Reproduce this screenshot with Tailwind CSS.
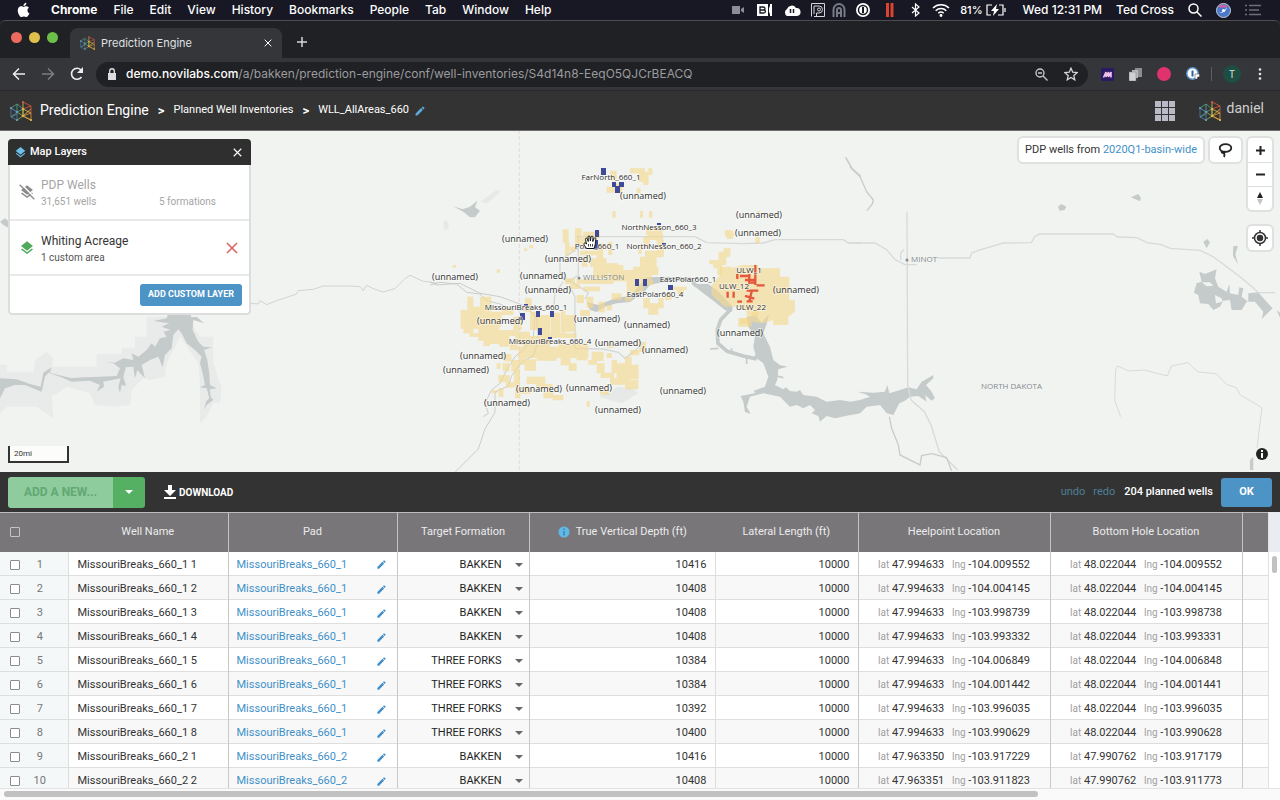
<!DOCTYPE html>
<html lang="en">
<head>
  <meta charset="UTF-8">
  <meta name="viewport" content="width=device-width, initial-scale=1.0">
  <title>Prediction Engine</title>
  <script src="https://cdn.jsdelivr.net/npm/@tailwindcss/browser@4"></script>
</head>
<body class="flex flex-col h-screen overflow-hidden bg-[#202124] font-['Roboto',sans-serif]">

  <!-- Shared icons -->
  <svg class="hidden">
    <symbol id="logo" viewBox="0 0 22 20">
      <g fill="none" stroke-width=".8">
        <path stroke="#4f7fb5" d="M1 7v9l6 3V11zM1 7l6 4M1 16l6-5"/>
        <path stroke="#58a88f" d="M1 7l6-4 6 5-6 3M7 3v8M1 16l6-3"/>
        <path stroke="#8bb85c" d="M7 19l6-4V8M7 11l6 4"/>
        <path stroke="#e8c547" d="M13 1v14l8-7M13 8l8 4M13 15l8 4"/>
        <path stroke="#e2593f" d="M13 1l8 4v7M13 8l8-3"/>
        <path stroke="#e69a3c" d="M21 12v7l-8-4 8-3"/>
      </g>
      <g fill="#d9b64a"><circle cx="13" cy="8" r="1.2"/><circle cx="13" cy="15" r="1.2"/><circle cx="21" cy="19" r="1.1"/></g>
      <g fill="#5fa3a8"><circle cx="1" cy="7" r="1.1"/><circle cx="7" cy="11" r="1.2"/><circle cx="7" cy="19" r="1.1"/></g>
      <circle cx="13" cy="1" r="1" fill="#e2593f"/>
    </symbol>
    <symbol id="pencil" viewBox="0 0 24 24"><path fill="currentColor" d="M3 17.25V21h3.75L17.8 9.94l-3.75-3.75L3 17.25zM20.7 7.04a1 1 0 0 0 0-1.41l-2.34-2.34a1 1 0 0 0-1.41 0l-1.83 1.83 3.75 3.75 1.83-1.83z"/></symbol>
    <symbol id="layers" viewBox="0 0 24 24"><path fill="currentColor" d="M12 18.54l-7.37-5.73L3 14.07l9 7 9-7-1.63-1.27L12 18.54zM12 16l7.36-5.73L21 9l-9-7-9 7 1.63 1.27L12 16z"/></symbol>
    <symbol id="caret" viewBox="0 0 10 5"><path fill="currentColor" d="M0 0h10L5 5z"/></symbol>
    <symbol id="cross" viewBox="0 0 12 12"><path fill="none" stroke="currentColor" stroke-width="1.5" d="M1 1l10 10M11 1L1 11"/></symbol>
  </svg>

  <!-- System menu bar -->
  <div class="flex items-center shrink-0 h-5 pl-4 pr-[19px] bg-[#171824] text-white text-[12px] font-medium font-['Inter',sans-serif]">
    <nav class="flex items-center gap-4 mr-auto">
      <svg class="w-4 h-4 mr-[3px]" viewBox="0 0 24 24" fill="#fff"><path d="M17.1 12.6c0-2.7 2.2-4 2.3-4.1-1.3-1.8-3.2-2.1-3.9-2.1-1.7-.2-3.2 1-4.1 1-.8 0-2.1-1-3.5-.9C6.1 6.5 4.4 7.5 3.5 9.1c-1.9 3.300-.5 8.200 1.400 10.800.9 1.300 2 2.800 3.400 2.700 1.400-.1 1.900-.9 3.500-.9s2.100.9 3.500.8c1.500 0 2.400-1.300 3.300-2.600 1-1.500 1.500-3 1.500-3-.1-.1-3-1.200-3-4.300zM14.400 4.600c.8-.9 1.300-2.200 1.100-3.400-1.100 0-2.400.7-3.200 1.600-.7.8-1.300 2.100-1.200 3.300 1.300.1 2.500-.6 3.300-1.500z"/></svg>
      <a href="#" class="font-bold">Chrome</a>
      <a href="#">File</a>
      <a href="#">Edit</a>
      <a href="#">View</a>
      <a href="#">History</a>
      <a href="#">Bookmarks</a>
      <a href="#">People</a>
      <a href="#">Tab</a>
      <a href="#">Window</a>
      <a href="#">Help</a>
    </nav>
    <div class="flex items-center gap-[10px]">
      <svg class="w-3 h-3 mr-[3px]" viewBox="0 0 12 12" fill="#8b8d97"><path d="M0 2h8v8H0zM9 5l3-2v6L9 7z"/></svg>
      <svg class="w-4 h-3" viewBox="0 0 16 12"><path fill="#fff" d="M0 0h11v12H0zM12 4l1-2V0h2v12h-2v-2l-1-2z"/><path fill="none" stroke="#171824" stroke-width="1.3" d="M3 3h3q2 0 2 1.5T6 6H3V3zM3 6h3.500q2 0 2 1.500T6.500 9H3V6z"/></svg>
      <svg class="w-[18px] h-3" viewBox="0 0 18 12"><path fill="#fff" d="M4 12a4 4 0 0 1 0-7 5 5 0 0 1 9-1 4 4 0 0 1 1 8z"/><path stroke="#171824" stroke-width="1.5" d="M7.500 5v4M10.500 5v4"/></svg>
      <svg class="w-[14px] h-[14px] -mr-[3px]" viewBox="0 0 14 14" fill="none" stroke="#d5d5da"><path d="M.5.5h13v13H3M.5.5v13M3 11V3h5a3.500 3.500 0 0 1 0 7H5.500v3"/><circle cx="8" cy="6.500" r="1.500"/></svg>
      <svg class="w-[14px] h-[14px]" viewBox="0 0 14 14" fill="none" stroke="#777985" stroke-width="2"><path d="M1.500 14V6.500a5.500 5.500 0 0 1 11 0V14M5 14V7a2 2 0 0 1 4 0v7M5 10h4"/></svg>
      <svg class="w-[14px] h-[14px]" viewBox="0 0 14 14"><circle cx="7" cy="7" r="7" fill="#fff"/><circle cx="7" cy="7" r="4.500" fill="none" stroke="#171824" stroke-width="1.500"/><path d="M7 4v6" stroke="#171824" stroke-width="2"/></svg>
      <svg class="w-2 h-[14px] mx-[6px]" viewBox="0 0 8 14" fill="#d9432f"><path d="M0 0h3v14H0zM4.500 0h3v14h-3z"/></svg>
      <svg class="w-3 h-[14px]" viewBox="0 0 12 14" fill="none" stroke="#fff" stroke-width="1.200"><path d="M2 4l7 6-3.500 3V1L9 4l-7 6"/></svg>
      <svg class="w-[18px] h-[14px]" viewBox="0 0 18 14" fill="none" stroke="#fff" stroke-width="1.500"><path d="M1 5a11.500 11.500 0 0 1 16 0M3.700 7.700a7.500 7.500 0 0 1 10.600 0M6.300 10.200a4 4 0 0 1 5.400 0"/><circle cx="9" cy="12.500" r=".7"/></svg>
      <span class="-mr-[7px] text-[11px]">81%</span>
      <svg class="w-5 h-3" viewBox="0 0 20 12" fill="none" stroke="#fff" stroke-width="1.200"><path d="M6 1H1v10h4M13 1h4v10h-5M19 4v4"/><path fill="#fff" d="M11 0L5 7h3l-1 5 6-7h-3z" stroke="none"/></svg>
    </div>
    <div class="flex items-center gap-[14px] ml-[17px]">
      <span>Wed 12:31 PM</span>
      <span>Ted Cross</span>
      <svg class="w-[14px] h-[14px]" viewBox="0 0 14 14" fill="none" stroke="#fff" stroke-width="1.500"><circle cx="5.500" cy="5.500" r="4.500"/><path d="M9 9l4.500 4.500"/></svg>
      <svg class="w-[15px] h-[15px]" viewBox="0 0 15 15"><circle cx="7.500" cy="7.500" r="7" fill="#4a79c9" stroke="#c9c9d6"/><path fill="#d35fa0" d="M2 4q5-5 10 0-5 1-10 0z"/><path fill="#e9f2ff" d="M3 10q5-1 8-6-1 6-8 6z"/><circle cx="7.500" cy="7.500" r="1.500" fill="#fff"/></svg>
      <svg class="w-4 h-3" viewBox="0 0 16 12" stroke="#6c6e7a" stroke-width="1.300"><path d="M0 1.500h2M4 1.500h12M0 6h2M4 6h10M0 10.500h2M4 10.500h12"/></svg>
    </div>
  </div>

  <!-- Browser tabs -->
  <div class="flex items-end shrink-0 h-[38px] border-t border-[#4c4d50] rounded-t-md">
    <div class="flex items-center gap-[7px] w-[70px] h-full pl-[11px] pb-1">
      <span class="w-[11px] h-[11px] rounded-full bg-[#ed6a5e]"></span>
      <span class="w-[11px] h-[11px] rounded-full bg-[#e0c04c]"></span>
      <span class="w-[11px] h-[11px] rounded-full bg-[#6cc04a]"></span>
    </div>
    <div class="flex items-center w-[212px] h-[30px] pl-[10px] pr-[10px] rounded-t-lg bg-[#35363a] text-[11px] text-[#dfe0e2] font-['Inter',sans-serif]">
      <svg class="w-[15px] h-[14px] mr-[6px]"><use href="#logo"/></svg>
      <span class="grow">Prediction Engine</span>
      <button aria-label="Close tab"><svg class="w-2 h-2 text-white"><use href="#cross"/></svg></button>
    </div>
    <button aria-label="New tab" class="ml-[14px] mb-[10px]"><svg class="w-3 h-3" viewBox="0 0 12 12" stroke="#d6d7d9" stroke-width="1.500"><path d="M6 1v10M1 6h10"/></svg></button>
  </div>

  <!-- Browser toolbar -->
  <div class="flex items-center shrink-0 h-8 pl-3 pr-[18px] bg-[#35363a] font-['Inter',sans-serif]">
    <button aria-label="Back"><svg class="w-[14px] h-[14px]" viewBox="0 0 14 14" fill="none" stroke="#eee" stroke-width="1.500"><path d="M13 7H2M7 1.500L1.500 7 7 12.500"/></svg></button>
    <button aria-label="Forward" class="ml-[15px]"><svg class="w-[14px] h-[14px]" viewBox="0 0 14 14" fill="none" stroke="#7b7c80" stroke-width="1.500"><path d="M1 7h11M7 1.500L12.500 7 7 12.500"/></svg></button>
    <button aria-label="Reload" class="ml-[15px]"><svg class="w-[14px] h-[14px]" viewBox="0 0 14 14" fill="none" stroke="#eee" stroke-width="1.600"><path d="M11.500 10A5.500 5.500 0 1 1 11 3"/><path fill="#eee" stroke="none" d="M13 0v6H7z"/></svg></button>
    <div class="flex items-center grow h-[25px] ml-3 px-[10px] rounded-full bg-[#202124]">
      <svg class="w-3 h-3 mr-2" viewBox="0 0 12 12"><path fill="#dcdde0" d="M2 5h8v7H2z"/><path fill="none" stroke="#dcdde0" stroke-width="1.400" d="M3.700 5V3a2.300 2.300 0 0 1 4.600 0v2"/></svg>
      <span class="grow text-[12px] text-[#9a9b9f]"><span class="font-medium text-white">demo.novilabs.com</span>/a/bakken/prediction-engine/conf/well-inventories/S4d14n8-EeqO5QJCrBEACQ</span>
      <svg class="w-[13px] h-[13px]" viewBox="0 0 13 13" fill="none" stroke="#c6c7ca" stroke-width="1.400"><circle cx="5" cy="5" r="4"/><path d="M8 8l4.500 4.500M3 5h4"/></svg>
      <svg class="w-[14px] h-[14px] ml-4" viewBox="0 0 24 24" fill="none" stroke="#d6d7d9" stroke-width="2.200"><path d="M12 2l3 7 7.500.7-5.700 5 1.700 7.300L12 18l-6.500 4 1.700-7.300-5.700-5L9 9z"/></svg>
    </div>
    <div class="flex items-center gap-[15px] ml-[13px]">
      <svg class="w-[13px] h-[13px]" viewBox="0 0 13 13"><rect width="13" height="13" rx="1" fill="#2b1a63"/><path fill="none" stroke="#f0c3ef" stroke-width="1.600" d="M2.500 9.500L5 4v5l2.500-5v5L10 4v5.500"/></svg>
      <svg class="w-[13px] h-[13px]" viewBox="0 0 13 13"><path fill="#8d8e91" d="M6 0h7v9H6z"/><path fill="#b9babc" d="M3 2h6v8H3z"/><path fill="#d0d0d2" stroke="#77787b" stroke-width=".5" d="M0 4h7v9H0z"/></svg>
      <span class="w-[14px] h-[14px] rounded-full bg-[#e0326c]"></span>
      <svg class="w-[14px] h-[14px]" viewBox="0 0 14 14"><circle cx="6.500" cy="6.500" r="5.700" fill="#fff" stroke="#5b95d0" stroke-width="1.500"/><path stroke="#2d5f9e" stroke-width="2" d="M6.500 3.500v6"/><path fill="#fff" stroke="#35363a" stroke-width=".5" d="M9 7h4.500v3h-2v2H9z"/></svg>
      <span class="w-px h-[14px] -ml-1 bg-[#5d5e62]"></span>
      <span class="flex items-center justify-center w-[18px] h-[18px] -ml-1 rounded-full bg-[#1f4d42] text-[10px] text-[#cfe0da]">T</span>
      <button aria-label="Browser menu" class="ml-[2px]"><svg class="w-1 h-3" viewBox="0 0 4 12" fill="#e6e6e6"><circle cx="2" cy="1.500" r="1.300"/><circle cx="2" cy="6" r="1.300"/><circle cx="2" cy="10.500" r="1.300"/></svg></button>
    </div>
  </div>

  <!-- App header -->
  <header class="flex items-center justify-between shrink-0 h-[41px] px-[10px] border-t border-b border-t-[#29292b] border-b-[#6d6b6d] bg-[#333333] text-white">
    <nav class="flex items-center">
      <svg class="w-[22px] h-5 mr-2"><use href="#logo"/></svg>
      <a href="#" class="text-[14px]">Prediction Engine</a>
      <span class="mx-[9px] text-[13px] font-bold">&gt;</span>
      <a href="#" class="text-[11px]">Planned Well Inventories</a>
      <span class="mx-[9px] text-[13px] font-bold">&gt;</span>
      <span class="text-[11px]">WLL_AllAreas_660</span>
      <button aria-label="Rename inventory" class="ml-[5px]"><svg class="block w-3 h-3 text-[#5fa9dc]"><use href="#pencil"/></svg></button>
    </nav>
    <div class="flex items-center mr-[6px]">
      <button aria-label="Apps"><svg class="block w-5 h-5" viewBox="0 0 20 20" fill="#b9bac6"><path d="M0 0h6v6H0zM7 0h6v6H7zM14 0h6v6h-6zM0 7h6v6H0zM7 7h6v6H7zM14 7h6v6h-6zM0 14h6v6H0zM7 14h6v6H7zM14 14h6v6h-6z"/></svg></button>
      <svg class="w-[22px] h-5 ml-6 mr-[6px]"><use href="#logo"/></svg>
      <span class="pb-1 text-[14px] text-[#cfcfcf]">daniel</span>
    </div>
  </header>

  <!-- Map -->
  <main class="relative grow min-h-0 overflow-hidden bg-[#f1f3f0]">
    <svg class="absolute inset-0 w-full h-full" viewBox="0 131 1280 341" preserveAspectRatio="xMidYMid slice">
      <!-- West: reservoir -->
      <g transform="translate(0 130) scale(.3333)">
        <path fill="#e8ebe9" d="M0 705H20V725H100L105 690 140 665 160 685 155 710H290V672H365V655H405V620H440V560H560L600 620H640V700L665 770 660 820H640L620 860 600 880V760L595 700 540 620 500 700 495 740 450 750 430 745 395 780 390 825 340 830 285 825 270 790 200 770 180 785 155 800 160 865 110 830H60L20 830 0 850z"/>
        <path fill="#c5cbca" d="M0 745L50 748 90 762 122 770 130 728 155 712 150 728 175 735 215 745 250 742 300 740 350 738 360 715 340 700 315 695 345 698 370 685 400 690 395 670 415 680 440 660 455 640 465 650 480 625 500 620 490 605 512 600 485 590 508 580 460 573 500 565 505 550 568 550 575 562 590 560 612 580 580 570 578 600 595 635 610 650 635 652 612 660 622 690 628 730 630 765 650 775 630 778 632 800 640 810 620 825 612 840 618 815 628 805 620 775 600 772 615 765 608 730 600 700 605 680 585 660 560 640 545 610 535 598 520 615 515 655 495 675 488 712 475 680 450 690 425 705 435 745 412 720 405 745 400 710 378 712 370 740 378 768 365 765 360 790 355 770 362 745 310 755 312 770 290 785 300 765 270 752 215 755 185 742 145 728 135 740 125 785 75 765 45 765 15 775 0 805zM0 275L15 265 25 273V293L10 285z"/>
        <path fill="none" stroke="#cfd3d1" stroke-width="3" d="M750 520l25 2 5-10 20 12 30-12 25-8 35-12 5-10 45-4 30-10h80l30 2 10 12 10-16 20 10 30 10 35-10 30-30 15-10 40 18 40 5"/>
      </g>

      <!-- Centre: roads, rivers and lake -->
      <g transform="translate(430 130) scale(.3333)">
        <path fill="#e6e9e7" d="M505 800l60-30 40 5 20 15-50 30zM40 275l12-5 5 25-15 5zM150 215l50-35 12 5-40 35z"/>
        <path fill="#c5cbca" d="M68 228L98 238 120 230 142 212 135 232 150 242 135 262H120L100 245zM470 516L505 525 560 503 600 498 625 470 650 442 720 440 730 452 690 458 660 464 645 484 600 516 560 520 525 530 500 546 480 540zM785 462L835 462 860 480 890 510 908 530 905 546 885 540 850 512 820 490z"/>
        <path fill="#c5cbca" d="M950 562L975 555 995 578 1017 553 1010 582 1000 610 1020 650 1030 690 1050 705 1073 710 1045 718 1042 750 1035 765 1060 778 1068 772 1080 783 1100 785 1110 780 1120 795 1160 800 1190 815 1230 810 1262 815V855L1215 865 1190 858 1170 875 1165 858 1145 850 1155 840 1140 825 1120 835 1100 825 1080 830 1050 800 1000 790 960 800 950 830 962 852 945 846 940 815 932 798 975 790 972 782 1005 770 1015 740 1000 700 980 685 970 650 975 620 955 590z"/>
        <path fill="none" stroke="#c5cbca" stroke-width="11" d="M720 447h60l20 22M905 535l-33 35-10 30 2 40 28 24 48 14 35 8 12-18"/>
        <path fill="none" stroke="#c5cbca" stroke-width="5" d="M865 655l-25 2M905 670v-15M950 682v20M1030 735l30 8"/>
        <g fill="none" stroke="#d5d9d7" stroke-width="4">
          <path d="M440 320h355l35 18 110 3 60-2 35-10h205l15 10h40"/>
          <path d="M445 320v35l-55 35v40l15 20h20l20-15v-80M400 450l30 8 45 30-10 20M400 455l-25 35-3 35M425 480l10 20v155l85 2 45 10 20 18 20-15 25-20"/>
        </g>
        <g fill="none" stroke="#c8cdcc" stroke-width="3">
          <path d="M0 465l30-8 50 5 30 25 40 5 20 20 40 10 30 15 60 5 20 20 5 70-15 45-35 20-30 40-10 30-40 20v60l-30 50-20 60-70 70-40 20-10 15"/>
          <path d="M0 455l20 10 70-5 60 30 60 10 40 15 40 15 25 30-5 60-30 40-25 20-25 40-20 40-25 20-20 40 10 30-15 10"/>
          <path stroke-width="5" d="M1247 82l20 35 25 22"/>
        </g>
        <path stroke="#ddd0d0" stroke-width="2" stroke-dasharray="12 6" d="M268 0v1030"/>
      </g>

      <!-- East: roads and lakes -->
      <g transform="translate(850 130) scale(.3333)">
        <path fill="#c5cbca" d="M0 815L30 810 60 800 45 792 22 785 70 788 105 785 112 765 118 790 150 780 175 772 200 778 215 755 250 735 250 745 228 765 245 785 255 805 245 812 225 795 230 815 205 798 180 800 165 812 148 820 130 855 110 850 90 825 50 830 30 850 0 856z"/>
        <path fill="#c5cbca" d="M1048 425L1065 432 1100 418 1095 445 1105 470 1130 485 1138 462 1140 490 1165 495 1168 472 1180 475 1175 500 1195 515V490L1225 487 1245 510 1268 535 1235 567 1240 545 1215 515 1190 515 1175 540 1145 540 1140 510 1120 512 1110 530 1090 540 1075 522 1050 520 1045 495 1032 488 1040 460 1055 455z"/>
        <path fill="#f1f3f0" d="M1055 457h25l10 10-20 2zM1095 495l20 10 3 10-20 5z"/>
        <path fill="#c5cbca" d="M624 230l10-8 15 8-5 10-15 2zM843 202l22-10 8 12-3 10zM1060 335l12-8 8 10-10 18zM1150 348h14l-8 25 8 30-15-25zM1280 540l10 8v15zM1200 1020v-30l10-10v40z"/>
        <g fill="none" stroke="#d7dad8" stroke-width="4">
          <path d="M0 339h75l35 20 25 30 30 15h35M152 390v-20l10-12M262 384h98l5-15 20-8 75-22 84-1 10-18 15-8h220l14 9 58 2 30 15 40 5 30 12 90 6 40 20 80 60 30 25 25 22h50"/>
          <path d="M171 245l2 520 10 45 40 35 20 40 25 80 55 55"/>
          <path stroke-width="3" d="M812 860l-18-50 3-90 5-12 35 15 45-3 70 18 12-30 50-10 30 28 55 5 30 32 30 10 12 22 65 38-15 120"/>
          <path stroke="#c8cdcc" stroke-width="4" d="M118 860l7 35 20 50 5 30 60 30 5-28 30-6 45 12 15 40M0 110l30 30 20 45 20 25-3 12-16 20"/>
        </g>
      </g>

      <!-- Acreage blocks -->
      <g id="acreage" transform="translate(430 130) scale(.3333)" fill="#f5d990" fill-opacity=".65">
        <path d="M905 415l30-10h50v10h65v25h28v70h17v35l-20 15v25h-45v-15l-30 10-35-5v15h-40v-25h25v-20l-25-15h-40l-40-35v-30l25-30v-25h35z"/>
        <path d="M838 390h28v-25h15v-10h20v25h-12v25h-12v30h-15v-20h-12v-12h-12z"/>
        <path d="M885 300h20l8 12-6 15h-15l-8-15zM976 322h14v18h-14zM980 243h10v8h-10z"/>
      </g>

      <!-- Planned wells -->
      <g id="wells" fill="#3f4a9b"></g>
      <g transform="translate(430 130) scale(.3333)" fill="none" stroke="#e4573d" stroke-width="7">
        <path d="M893 485v18M911 485v18M922 432v15M922 515h14M930 438h30M945 450h30M958 432v30M976 405v60M962 458h15M980 466h24M950 482h35M966 480l-8 35M945 498l28 8M950 514h18"/>
      </g>

      <!-- Place names -->
      <g class="font-['Open_Sans',sans-serif] text-[8px]" fill="#868b90">
        <circle cx="579" cy="278" r="1.500"/><text x="583" y="280">WILLISTON</text>
        <circle cx="907" cy="260" r="1.500"/><text x="911" y="262">MINOT</text>
        <text x="981" y="389">NORTH DAKOTA</text>
      </g>
      <g id="labels" class="font-['Open_Sans',sans-serif]" fill="#2d2d2d" stroke="#fff" stroke-opacity=".6" stroke-width="1.500" paint-order="stroke" text-anchor="middle"></g>

      <!-- Grab cursor -->
      <g transform="translate(583 235)">
        <path fill="#fff" stroke="#111" d="M3.500 13.500C2 11 .5 9.500 1 8.500c.6-1 1.800-.3 2.500.5L2.500 4.500c-.3-1.500 1.500-1.800 2-.5l.8 2.500L5 2c0-1.500 2-1.500 2 0l.4 4L8 2c.2-1.400 2-1.200 2 .2L9.800 6.500 11 3.500c.5-1.200 2.200-.7 1.900.6C12.400 7 12.500 10 11 13.500z"/>
        <path stroke="#111" stroke-width=".8" d="M5.500 9v2.500M7.500 9v2.500M9.500 9v2.500"/>
      </g>
    </svg>

    <!-- Layers panel -->
    <section class="absolute top-2 left-2 w-[243px] rounded overflow-hidden">
      <div class="flex items-center h-[26px] pl-[6px] pr-[9px] bg-[#2f2f2f] text-white">
        <svg class="w-[13px] h-[13px] mr-[3px] text-[#6cc0ea]"><use href="#layers"/></svg>
        <h2 class="grow text-[11px] font-medium">Map Layers</h2>
        <button aria-label="Close panel"><svg class="block w-[9px] h-[9px]"><use href="#cross"/></svg></button>
      </div>
      <div class="rounded-b border-2 border-t-0 border-[#dcdedd] bg-white">
        <div class="flex items-center h-14 pl-[9px] border-b-2 border-[#e9e9e9] text-[#a5a5a5]">
          <svg class="w-4 h-4 mr-[6px] text-[#8a8a8a]" viewBox="0 0 24 24"><use href="#layers"/><path stroke="#fff" stroke-width="2.500" d="M3 0l21 21"/><path stroke="currentColor" stroke-width="2" d="M1 1l22 22"/></svg>
          <div class="w-[118px] pt-[2px]">
            <p class="text-[12px] leading-[17px]">PDP Wells</p>
            <p class="text-[10px] leading-4">31,651 wells</p>
          </div>
          <p class="pt-[19px] text-[10px] leading-4">5 formations</p>
        </div>
        <div class="flex items-center h-[55px] pl-[9px] pr-[11px] border-b-2 border-[#e9e9e9]">
          <svg class="w-4 h-4 mr-[6px] text-[#4fa95a]"><use href="#layers"/></svg>
          <div class="grow pt-[2px]">
            <p class="text-[12px] leading-[18px] text-[#333]">Whiting Acreage</p>
            <p class="text-[10px] leading-4 text-[#555]">1 custom area</p>
          </div>
          <button aria-label="Remove layer"><svg class="block w-3 h-3 text-[#dc5f5f]"><use href="#cross"/></svg></button>
        </div>
        <div class="flex justify-end pt-2 pb-[7px] pr-[7px]">
          <button class="h-[22px] px-2 rounded-[3px] bg-[#4c93c6] text-white text-[9px] font-bold">ADD CUSTOM LAYER</button>
        </div>
      </div>
    </section>

    <!-- Map controls -->
    <div class="absolute top-[7px] right-2 flex items-start gap-[7px]">
      <p class="h-6 px-[6px] rounded outline-2 outline-[#dfe1e0] bg-white text-[11px] leading-6 text-[#333]">PDP wells from <a href="#" class="text-[#3f90c8]">2020Q1-basin-wide</a></p>
      <button aria-label="Lasso select" class="flex items-center justify-center w-[31px] h-6 rounded outline-2 outline-[#dfe1e0] bg-white">
        <svg class="w-[15px] h-[15px]" viewBox="0 0 15 15" fill="none" stroke="#222" stroke-width="1.800"><ellipse cx="7.500" cy="5" rx="5.800" ry="3.800"/><path d="M3.500 8q0 2 2 2 2-.5 1-2M6 10q1 2 0 4"/></svg>
      </button>
      <div class="flex flex-col gap-4">
        <div class="flex flex-col w-6 rounded outline-2 outline-[#dfe1e0] bg-white divide-y divide-[#ddd]">
          <button aria-label="Zoom in" class="flex items-center justify-center h-[25px]"><svg class="w-[9px] h-[9px]" viewBox="0 0 9 9" stroke="#222" stroke-width="2"><path d="M4.500 0v9M0 4.500h9"/></svg></button>
          <button aria-label="Zoom out" class="flex items-center justify-center h-6"><svg class="w-[9px] h-[9px]" viewBox="0 0 9 9" stroke="#222" stroke-width="2"><path d="M0 4.500h9"/></svg></button>
          <button aria-label="Reset north" class="flex items-center justify-center h-[23px]"><svg class="w-[6px] h-[13px]" viewBox="0 0 6 13"><path fill="#222" d="M3 0l3 6H0z"/><path fill="#c4c4c4" d="M0 7h6l-3 6z"/></svg></button>
        </div>
        <button aria-label="Find my location" class="flex items-center justify-center w-6 h-6 rounded outline-2 outline-[#dfe1e0] bg-white">
          <svg class="w-4 h-4" viewBox="0 0 16 16" fill="none" stroke="#333" stroke-width="1.500"><circle cx="8" cy="8" r="5.500"/><path d="M8 0v3M8 13v3M0 8h3M13 8h3"/><circle cx="8" cy="8" r="2.500" fill="#333"/></svg>
        </button>
      </div>
    </div>
    <div class="absolute left-2 bottom-[9px] w-[61px] h-[17px] pl-1 border-2 border-t-0 border-[#333] bg-white/75 text-[8px] leading-4 text-[#333]">20mi</div>
    <button aria-label="Attribution" class="absolute right-3 bottom-3"><svg class="block w-3 h-3" viewBox="0 0 12 12"><circle cx="6" cy="6" r="6" fill="#222"/><path stroke="#fff" stroke-width="2" d="M6 2v2M6 5v5"/></svg></button>
  </main>

  <!-- Wells table -->
  <section class="flex flex-col shrink-0 h-[41%] bg-white">
    <div class="flex items-center shrink-0 h-10 pl-2 pr-2 bg-[#333333] text-white">
      <div class="flex h-[31px] rounded-[3px] overflow-hidden">
        <button disabled class="w-[105px] bg-[#8ecb9d] text-[#62a873] text-[12px] font-bold">ADD A NEW...</button>
        <button aria-label="More options" class="flex items-center justify-center w-8 bg-[#55b064]"><svg class="w-2 h-1"><use href="#caret"/></svg></button>
      </div>
      <button class="flex items-center ml-[19px] text-[10px] font-bold">
        <svg class="w-3 h-[14px] mr-[3px]" viewBox="0 0 12 14" fill="#fff"><path d="M4 0h4v5h4l-6 6-6-6h4zM0 12h12v2H0z"/></svg>
        DOWNLOAD
      </button>
      <div class="flex items-center ml-auto text-[11px]">
        <a href="#" class="text-[#4f7f97]">undo</a>
        <a href="#" class="ml-2 text-[#4f7f97]">redo</a>
        <span class="ml-[9px] font-medium">204 planned wells</span>
        <button class="w-[51px] h-[29px] ml-2 rounded-[3px] bg-[#4c93c6] font-bold">OK</button>
      </div>
    </div>
    <div class="flex grow min-h-0">
      <div class="grow min-w-0 overflow-hidden">
        <table class="w-full table-fixed border-collapse text-[11px] text-[#333]">
          <colgroup>
            <col class="w-[29px]"><col class="w-[39px]"><col class="w-[160px]"><col class="w-[169px]"><col class="w-[132px]"><col class="w-[186px]"><col class="w-[143px]"><col class="w-[192px]"><col class="w-[192px]"><col>
          </colgroup>
          <thead>
            <tr class="h-[39px] bg-[#787679] text-[#ececec] border-t border-[#bdbdbd]">
              <th class="pl-[10px]"><input type="checkbox" aria-label="Select all wells" class="block appearance-none w-[10px] h-[10px] border border-[#c4c4c4] rounded-[1px]"></th>
              <th></th>
              <th class="font-normal border-r border-[#c4c4c4]">Well Name</th>
              <th class="font-normal border-r border-[#c4c4c4]">Pad</th>
              <th class="font-normal border-r border-[#c4c4c4]">Target Formation</th>
              <th class="font-normal"><span class="flex items-center justify-center gap-[6px]"><svg class="w-3 h-3" viewBox="0 0 12 12"><circle cx="6" cy="6" r="5.500" fill="#63b9e6"/><path stroke="#3b86b3" stroke-width="1.500" d="M6 2.500V4M6 5v4.500"/></svg>True Vertical Depth (ft)</span></th>
              <th class="font-normal border-r border-[#c4c4c4]">Lateral Length (ft)</th>
              <th class="font-normal border-r border-[#c4c4c4]">Heelpoint Location</th>
              <th class="font-normal border-r border-[#c4c4c4]">Bottom Hole Location</th>
              <th></th>
            </tr>
          </thead>
          <tbody id="rows"></tbody>
        </table>
      </div>
      <div class="w-3 shrink-0 border-l border-[#e2e2e2]">
        <div class="h-10 bg-[#e9edf1]"></div>
        <div class="w-[5px] h-[17px] mt-1 mx-auto rounded-full bg-[#c1c1c1]"></div>
      </div>
    </div>
    <div class="shrink-0 h-3 pl-1 pt-[2px] border-t border-[#e2e2e2] bg-[#fafafa]">
      <div class="w-[81%] h-[6px] rounded-full bg-[#c1c1c1]"></div>
    </div>
  </section>

  <script>
    // name, pad, formation, tvd, heel lat/lng, bottom hole lat/lng
    const wells = [
      ['MissouriBreaks_660_1 1', 'MissouriBreaks_660_1', 'BAKKEN', 10416, '47.994633', '-104.009552', '48.022044', '-104.009552'],
      ['MissouriBreaks_660_1 2', 'MissouriBreaks_660_1', 'BAKKEN', 10408, '47.994633', '-104.004145', '48.022044', '-104.004145'],
      ['MissouriBreaks_660_1 3', 'MissouriBreaks_660_1', 'BAKKEN', 10408, '47.994633', '-103.998739', '48.022044', '-103.998738'],
      ['MissouriBreaks_660_1 4', 'MissouriBreaks_660_1', 'BAKKEN', 10408, '47.994633', '-103.993332', '48.022044', '-103.993331'],
      ['MissouriBreaks_660_1 5', 'MissouriBreaks_660_1', 'THREE FORKS', 10384, '47.994633', '-104.006849', '48.022044', '-104.006848'],
      ['MissouriBreaks_660_1 6', 'MissouriBreaks_660_1', 'THREE FORKS', 10384, '47.994633', '-104.001442', '48.022044', '-104.001441'],
      ['MissouriBreaks_660_1 7', 'MissouriBreaks_660_1', 'THREE FORKS', 10392, '47.994633', '-103.996035', '48.022044', '-103.996035'],
      ['MissouriBreaks_660_1 8', 'MissouriBreaks_660_1', 'THREE FORKS', 10400, '47.994633', '-103.990629', '48.022044', '-103.990628'],
      ['MissouriBreaks_660_2 1', 'MissouriBreaks_660_2', 'BAKKEN', 10416, '47.963350', '-103.917229', '47.990762', '-103.917179'],
      ['MissouriBreaks_660_2 2', 'MissouriBreaks_660_2', 'BAKKEN', 10408, '47.963351', '-103.911823', '47.990762', '-103.911773'],
    ];

    const latLng = (lat, lng) => `<span class="text-[10px] text-[#a0a0a0]">lat</span> ${lat} <span class="ml-[5px] text-[10px] text-[#a0a0a0]">lng</span> ${lng}`;

    document.getElementById('rows').innerHTML = wells.map((w, i) => `
      <tr class="h-6 border-b border-[#dedede] even:bg-[#f8f8f8] [&>td]:pt-[3px]">
        <td class="pl-[10px] bg-[#f5f8f9]"><input type="checkbox" aria-label="Select ${w[0]}" class="block appearance-none w-[10px] h-[10px] border border-[#8c8c8c] rounded-[1px] bg-white"></td>
        <td class="pr-[17px] text-center text-[#777] bg-[#f5f8f9] border-r border-[#dedede]">${i + 1}</td>
        <td class="pl-[9px] border-r border-[#c9c9c9]">${w[0]}</td>
        <td class="px-2 border-r border-[#c9c9c9]"><span class="flex items-center justify-between"><a href="#" class="text-[#3f90c8]">${w[1]}</a><button aria-label="Edit pad" class="mr-[2px]"><svg class="block w-[11px] h-[11px] text-[#3f90c8]"><use href="#pencil"/></svg></button></span></td>
        <td class="pr-[6px] border-r border-[#c9c9c9]"><span class="flex items-center justify-end">
          <select aria-label="Target formation" class="appearance-none grow min-w-0 mr-[13px] text-right [text-align-last:right] text-[#222]"><option>${w[2]}</option></select>
          <svg class="w-2 h-1 text-[#666]"><use href="#caret"/></svg></span></td>
        <td class="pr-2 text-right border-r border-[#dedede]">${w[3]}</td>
        <td class="pr-2 text-right border-r border-[#c9c9c9]">10000</td>
        <td class="text-center whitespace-nowrap border-r border-[#c9c9c9]">${latLng(w[4], w[5])}</td>
        <td class="text-center whitespace-nowrap border-r border-[#c9c9c9]">${latLng(w[6], w[7])}</td>
        <td></td>
      </tr>`).join('');

    // map labels: x, y, text (text left out = unnamed area)
    const labels = [
      [643, 199], [759, 218], [758, 236], [525, 242], [568, 262], [455, 280], [543, 279], [548, 293],
      [796, 293], [500, 324], [597, 322], [647, 328], [740, 336], [618, 346], [665, 353], [483, 359],
      [466, 373], [539, 392], [589, 391], [683, 394], [507, 406], [618, 413],
      [611, 180, 'FarNorth_660_1'], [659, 230, 'NorthNesson_660_3'], [664, 249, 'NorthNesson_660_2'],
      [597, 249, 'Polar_660_1'], [688, 282, 'EastPolar660_1'], [655, 297, 'EastPolar660_4'],
      [526, 310, 'MissouriBreaks_660_1'], [550, 344, 'MissouriBreaks_660_4'],
      [749, 273, 'ULW_1'], [734, 289, 'ULW_12'], [751, 310, 'ULW_22'],
    ];
    document.getElementById('labels').innerHTML = labels.map(([x, y, text]) =>
      `<text x="${x}" y="${y}" class="${text ? 'text-[8px]' : 'text-[9px]'}">${text || '(unnamed)'}</text>`).join('');

    const pads = [
      [601, 168, 5, 7], [612, 182, 4, 5], [619, 182, 5, 5], [615, 186, 5, 7], [595, 230, 4, 7], [592, 240, 6, 9],
      [635, 279, 4, 7], [643, 279, 4, 7], [668, 285, 5, 5], [520, 313, 5, 7], [536, 311, 4, 6], [550, 311, 4, 6],
      [538, 328, 4, 7], [657, 223, 4, 2], [662, 243, 4, 2], [524, 304, 4, 2], [548, 337, 4, 2],
    ];
    document.getElementById('wells').innerHTML = pads.map(([x, y, w, h]) =>
      `<rect x="${x}" y="${y}" width="${w}" height="${h}"/>`).join('');

    // one path, so that overlapping blocks keep the same tint
    const blocks = [
      [512,115,14,20],[540,122,20,30],[600,115,45,15],[625,130,20,25],[640,125,16,40],[655,115,12,20],[530,170,20,18],[550,160,28,28],[620,175,12,15],[547,243,10,20],[630,243,9,20],[657,243,10,20],
      [398,298,18,40],[405,338,14,38],[435,295,20,50],[460,305,50,20],[455,325,30,30],[420,350,18,14],[500,340,20,45],[535,335,12,40],[450,362,60,14],[648,290,50,26],[655,316,45,14],[640,320,20,36],[680,330,22,50],[625,350,10,22],
      [455,380,18,30],[480,385,50,26],[520,400,45,30],[490,411,45,34],[560,405,20,25],[580,420,30,30],[540,430,60,24],[610,410,55,40],[630,380,50,30],[645,362,50,20],[665,410,20,25],[440,448,110,14],[405,445,30,18],[420,463,30,14],[460,470,50,14],[590,450,50,40],[640,450,30,16],[545,490,30,20],[585,500,20,14],[620,470,20,15],
      [440,495,22,24],[470,500,20,34],[505,515,20,32],[450,540,30,18],[530,525,16,16],[640,505,20,30],[655,520,30,34],[685,505,16,30],[705,490,20,20],[730,470,40,10],[742,480,20,12],
      [200,418,10,10],[298,345,12,10],[282,355,10,8],[68,405,10,8],
      [92,540,50,56],[112,500,18,40],[100,596,30,14],[130,530,55,66],[150,500,34,30],[185,545,30,45],[215,535,35,20],[118,610,60,10],[145,596,35,36],[180,590,28,52],[160,632,20,16],[205,600,60,18],[208,618,30,32],[240,640,24,20],[250,560,25,40],[285,505,20,40],[255,605,45,40],
      [300,545,28,55],[328,555,32,100],[362,548,28,70],[392,540,14,70],[405,555,30,50],[340,610,100,14],[280,618,60,36],[265,650,120,34],[385,640,90,44],[392,684,30,22],[416,700,24,22],[440,655,32,36],[320,684,60,8],
      [218,672,26,22],[244,690,24,34],[268,664,20,40],[284,688,34,34],[218,700,20,24],[205,735,34,22],[252,720,18,50],[228,757,24,16],[206,775,14,26],[185,780,16,10],[255,775,16,30],[290,740,56,22],[318,762,50,16],[272,770,30,22],[340,785,30,20],[368,795,32,16],[200,700,12,16],
      [485,665,36,28],[475,690,26,14],[500,700,24,30],[512,728,40,16],[545,690,16,40],[560,700,40,50],[585,680,20,30],[600,704,26,44],[540,744,60,20],[585,750,40,28],[530,670,16,14],[510,780,28,14],[470,814,10,16],[600,660,28,16],[628,636,20,30],[530,640,20,14],
      [930,565,26,16],[965,540,20,20],
    ];
    const acreage = document.createElementNS('http://www.w3.org/2000/svg', 'path');
    acreage.setAttribute('d', blocks.map(([x, y, w, h]) => `M${x} ${y}h${w}v${h}h-${w}z`).join(''));
    document.getElementById('acreage').appendChild(acreage);
  </script>
</body>
</html>
